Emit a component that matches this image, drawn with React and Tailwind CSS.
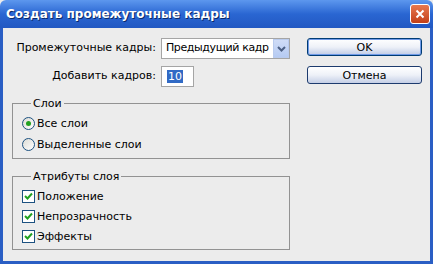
import React from "react";

const font = { fontFamily: '"DejaVu Sans", Verdana, sans-serif' };

function Radio({ checked, label }) {
  return (
    <div className="flex items-center h-[13px]">
      <div className="w-[13px] h-[13px] rounded-full border border-[#1c5180] bg-gradient-to-br from-[#dcdcd5] to-[#ffffff] flex items-center justify-center">
        {checked && <div className="w-[5px] h-[5px] rounded-full bg-[#21a121]" />}
      </div>
      <span className="ml-[2px] text-[11px] text-black leading-none whitespace-nowrap">{label}</span>
    </div>
  );
}

function Check({ label }) {
  return (
    <div className="flex items-center h-[13px]">
      <div className="w-[13px] h-[13px] border border-[#1c5180] bg-white flex items-center justify-center">
        <svg width="9" height="9" viewBox="0 0 9 9">
          <path d="M1 4 L3.5 6.5 L8 1.5" stroke="#21a121" strokeWidth="2" fill="none" />
        </svg>
      </div>
      <span className="ml-[2px] text-[11px] text-black leading-none whitespace-nowrap">{label}</span>
    </div>
  );
}

export default function App() {
  return (
    <div className="w-[433px] h-[264px] flex flex-col bg-[#ececec] overflow-hidden" style={font}>
      <div className="h-[28px] flex items-center justify-between pl-[6px] pr-[3px] bg-gradient-to-b from-[#5d97ee] via-[#2a66d2] to-[#2258c2] rounded-t-[6px]">
        <span className="text-white font-bold text-[12px] whitespace-nowrap [text-shadow:1px_1px_0_#0a2a6a]">Создать промежуточные кадры</span>
        <div className="w-[20px] h-[20px] rounded-[3px] border border-white bg-gradient-to-b from-[#e8784e] to-[#c33f16] flex items-center justify-center">
          <svg width="10" height="10" viewBox="0 0 10 10">
            <path d="M1.5 1.5 L8.5 8.5 M8.5 1.5 L1.5 8.5" stroke="white" strokeWidth="2" />
          </svg>
        </div>
      </div>
      <div className="flex-1 flex border-l-[3px] border-r-[3px] border-b-[3px] border-[#2a5ec4]">
        <div className="ml-[9px] w-[278px] pt-[10px] flex flex-col">
          <div className="flex items-center h-[21px]">
            <span className="w-[144px] text-right text-[11px] text-black whitespace-nowrap">Промежуточные кадры:</span>
            <div className="ml-[5px] w-[129px] h-[21px] border border-[#a5a5a5] bg-white flex items-center">
              <span className="flex-1 min-w-0 overflow-hidden pl-[4px] text-[11px] text-black whitespace-nowrap tracking-[-0.4px]">Предыдущий кадр</span>
              <div className="w-[16px] h-[19px] shrink-0 bg-gradient-to-b from-[#cfdcf6] to-[#b6cbf3] border border-[#b9cbee] flex items-center justify-center">
                <svg width="9" height="6" viewBox="0 0 9 6">
                  <path d="M1 1 L4.5 4.5 L8 1" stroke="#4d6185" strokeWidth="2" fill="none" />
                </svg>
              </div>
            </div>
          </div>
          <div className="flex items-center h-[21px] mt-[7px]">
            <span className="w-[144px] text-right text-[11px] text-black whitespace-nowrap">Добавить кадров:</span>
            <div className="ml-[5px] w-[33px] h-[21px] border border-[#a5a5a5] bg-white flex items-center pl-[5px]">
              <span className="bg-[#316ac5] text-white text-[11px] leading-[13px] px-[1px]">10</span>
            </div>
          </div>
          <div className="relative mt-[16px] h-[56px] border border-[#929292] pt-[13px] pl-[9px] flex flex-col gap-[8px]">
            <span className="absolute left-[18px] top-[-7px] px-[2px] bg-[#ececec] text-[11px] leading-[13px] text-black">Слои</span>
            <Radio checked label="Все слои" />
            <Radio label="Выделенные слои" />
          </div>
          <div className="relative mt-[17px] h-[74px] border border-[#929292] pt-[13px] pl-[9px] flex flex-col gap-[7px]">
            <span className="absolute left-[18px] top-[-7px] px-[2px] bg-[#ececec] text-[11px] leading-[13px] text-black whitespace-nowrap">Атрибуты слоя</span>
            <Check label="Положение" />
            <Check label="Непрозрачность" />
            <Check label="Эффекты" />
          </div>
        </div>
        <div className="ml-[17px] pt-[10px] flex flex-col gap-[10px]">
          <button className="w-[115px] h-[18px] rounded-[3px] border border-[#003c74] shadow-[inset_0_0_0_1px_#6f9ae8] bg-gradient-to-b from-[#ffffff] via-[#eef1f8] to-[#bfcbe6] text-[11px] text-black leading-none flex items-center justify-center">
            OK
          </button>
          <button className="w-[115px] h-[18px] rounded-[3px] border border-[#1d3b6e] bg-gradient-to-b from-[#ffffff] via-[#eef1f8] to-[#c5cfe6] text-[11px] text-black leading-none flex items-center justify-center">
            Отмена
          </button>
        </div>
      </div>
    </div>
  );
}
